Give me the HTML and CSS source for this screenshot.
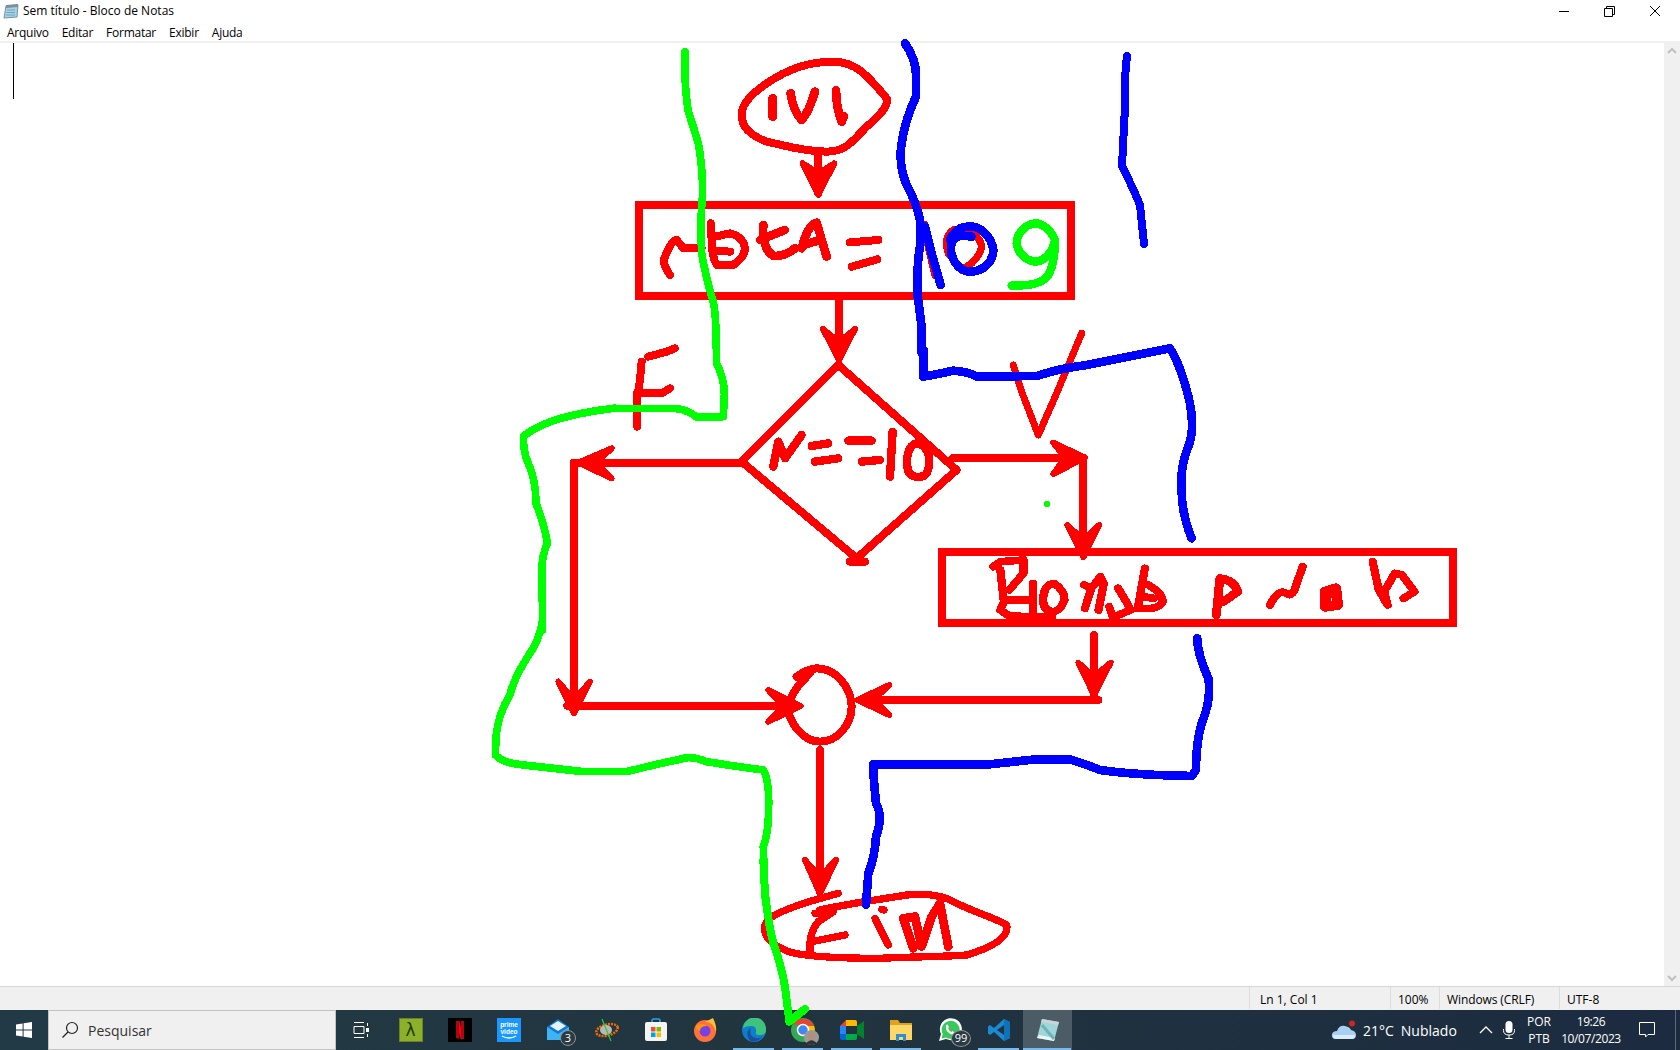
FILE: index.html
```html
<!doctype html>
<html>
<head>
<meta charset="utf-8">
<title>Sem título - Bloco de Notas</title>
<link rel="stylesheet" href="styles.css">
</head>
<body>
<div class="win">
	<div class="title_bar">
		<svg class="pad_small" viewBox="0 0 16 16"><path d="M3 3 L15 2 L14 14 L1 15Z" fill="#a9d3e3" stroke="#6d94a6"/><path d="M3 2 L15 1 L15 4 L3 5Z" fill="#7d8f99"/><path d="M4 7 H12 M3.5 9.5 H12 M3 12 H12" stroke="#6fa5bb"/></svg>
		<span class="title_text">Sem título - Bloco de Notas</span>
		<div class="win_btns">
			<svg viewBox="0 0 46 20"><path d="M19 10.5 H29" stroke="#000" fill="none"/></svg>
			<svg viewBox="0 0 46 20"><path d="M18.5 7.5 H26.5 V15.5 H18.5Z M20.5 7 V5.5 H28.5 V13.5 H27" stroke="#000" fill="none"/></svg>
			<svg viewBox="0 0 46 20"><path d="M18 5 L28 15 M28 5 L18 15" stroke="#000" fill="none"/></svg>
		</div>
	</div>
	<div class="menu_bar">
		<a>Arquivo</a><a>Editar</a><a>Formatar</a><a>Exibir</a><a>Ajuda</a>
	</div>
	<div class="editor">
		<div class="text_area"><div class="caret"></div></div>
		<div class="scroll_bar">
			<svg viewBox="0 0 16 16"><path d="M4 10 L8 6 L12 10" stroke="#c0c0c0" stroke-width="2" fill="none"/></svg>
			<svg viewBox="0 0 16 16"><path d="M4 6 L8 10 L12 6" stroke="#c0c0c0" stroke-width="2" fill="none"/></svg>
		</div>
	</div>
	<div class="status_bar">
		<div class="st st_pos">Ln 1, Col 1</div>
		<div class="st st_zoom">100%</div>
		<div class="st st_eol">Windows (CRLF)</div>
		<div class="st st_enc">UTF-8</div>
	</div>
	<div class="task_bar">
		<div class="start">
			<svg viewBox="0 0 16 16"><path d="M0 2.4 L6.6 1.4 V7.5 H0Z M7.6 1.3 L16 0 V7.5 H7.6Z M0 8.5 H6.6 V14.6 L0 13.6Z M7.6 8.5 H16 V16 L7.6 14.7Z" fill="#fff"/></svg>
		</div>
		<div class="search">
			<svg viewBox="0 0 18 18"><circle cx="11" cy="7" r="5.5" fill="none" stroke="#222" stroke-width="1.2"/><path d="M7 11 L1.5 16.5" stroke="#222" stroke-width="1.3"/></svg>
			<span>Pesquisar</span>
		</div>
		<div class="task_view">
			<svg viewBox="0 0 16 16"><path d="M1 .5 H11 M1 15.5 H11 M1 4.5 H11 V11.5 H1Z M14.5 1 V4 M14.5 12 V15" stroke="#fff" fill="none"/><rect x="13" y="6" width="3" height="4" fill="#fff"/></svg>
		</div>
		<div class="apps">
			<div class="app"><div class="lam">λ</div></div>
			<div class="app"><svg viewBox="0 0 24 24"><rect width="24" height="24" fill="#000"/><path d="M8 3 H11.5 L16 21 H12.500Z" fill="#e50914"/><path d="M8 3 H11 V21 L8 20Z M13 3 H16 V21 L13 20Z" fill="#b1060f"/></svg></div>
			<div class="app"><svg viewBox="0 0 24 24"><rect width="24" height="24" fill="#1a98ff"/><text x="12" y="9" class="prime">prime</text><text x="12" y="15.500" class="prime">video</text><path d="M5 18 Q12 22 19 18" stroke="#fff" stroke-width="1.300" fill="none"/></svg></div>
			<div class="app">
				<svg viewBox="0 0 24 24"><path d="M1 9 L12 1 L23 9 V22 H1Z" fill="#0f78d4"/><path d="M1 9 L12 16 L23 9 V22 H1Z" fill="#3fb4f2"/><path d="M4 8 L12 3 L20 8 L12 13Z" fill="#e6f3fb"/></svg>
				<div class="badge">3</div>
			</div>
			<div class="app"><svg viewBox="0 0 24 24"><ellipse cx="12" cy="12" rx="11" ry="5.500" transform="rotate(-15 12 12)" fill="none" stroke="#f26a00" stroke-width="2.500" stroke-dasharray="2 1"/><ellipse cx="11" cy="12" rx="6" ry="5" fill="#b9b9b9"/><path d="M7 1 L16 23" stroke="#2ad02a" stroke-width="1.200"/></svg></div>
			<div class="app"><svg viewBox="0 0 24 24"><path d="M8 5 V2.500 Q8 1 9.500 1 H14.500 Q16 1 16 2.500 V5" stroke="#2aa4e8" stroke-width="1.600" fill="none"/><rect x="1" y="4" width="22" height="19" rx="2" fill="#f4f4f4"/><rect x="7" y="9" width="4.500" height="4.500" fill="#f25022"/><rect x="12.500" y="9" width="4.500" height="4.500" fill="#7fba00"/><rect x="7" y="14.500" width="4.500" height="4.500" fill="#00a4ef"/><rect x="12.500" y="14.500" width="4.500" height="4.500" fill="#ffb900"/></svg></div>
			<div class="app"><svg viewBox="0 0 24 24"><circle cx="12" cy="13" r="11" fill="#ff7139"/><path d="M12 4 Q20 0 20 0 Q24 8 23 14 Q20 3 12 4Z" fill="#ffbd3a"/><circle cx="12" cy="13" r="5.500" fill="#7542e5"/><path d="M3 8 Q9 4 14 8 Q7 8 7 13 Q3 12 3 8Z" fill="#ff980e"/></svg></div>
			<div class="app"><svg viewBox="0 0 24 24"><circle cx="12" cy="12" r="12" fill="#0f7ec9"/><path d="M1 10 A11.500 11.500 0 0 1 24 12 Q24 17 18 17 Q13 17 14 14 Q15 8 9 8 Q4 8 1 10Z" fill="#3fc27e"/><path d="M8 23 Q2 14 9 10 Q6 18 14 20 Q18 21 21 18 Q16 25 8 23Z" fill="#1b4f9e"/></svg></div>
			<div class="app">
				<svg viewBox="0 0 24 24"><circle cx="12" cy="12" r="12" fill="#34a853"/><path d="M2 6 A12 12 0 0 1 23 8 H12Z" fill="#ea4335"/><path d="M12 8 H23 A12 12 0 0 1 14 24Z" fill="#fbbc05"/><circle cx="12" cy="12" r="5.500" fill="#4285f4" stroke="#fff" stroke-width="1.500"/></svg>
				<svg class="avatar" viewBox="0 0 14 14"><circle cx="7" cy="7" r="7" fill="#9a9a9a"/><circle cx="7" cy="5.500" r="3.200" fill="#b98d74"/><path d="M1.500 13 Q7 6 12.500 13 L7 14Z" fill="#333"/></svg>
			</div>
			<div class="app"><svg viewBox="0 0 24 24"><path d="M0 8 L6 2 H6 V8Z" fill="#ea4335"/><path d="M6 2 H15 Q17 2 17 4 V8 H6Z" fill="#ffba00"/><path d="M0 8 H6 V16 H0Z" fill="#2684fc"/><path d="M0 16 H6 V22 H2 Q0 22 0 20Z" fill="#0066da"/><path d="M6 16 H17 V20 Q17 22 15 22 H6Z" fill="#00ac47"/><path d="M17 8 L24 3 V21 L17 16Z" fill="#00832d"/><rect x="6" y="8" width="11" height="8" fill="#22333f"/></svg></div>
			<div class="app"><svg viewBox="0 0 24 24"><path d="M1 2 H9 L11 5 H23 V22 H1Z" fill="#e0a11c"/><rect x="1" y="7" width="22" height="15" fill="#ffd766"/><path d="M7 23 V16 H17 V23 H14 V19 H10 V23Z" fill="#2a8fd8"/></svg></div>
			<div class="app">
				<svg viewBox="0 0 24 24"><path d="M1 23 L3 16 A11 11 0 1 1 8 21Z" fill="#fff"/><path d="M3.500 20.500 L4.700 16 A9 9 0 1 1 8 19.500Z" fill="#3cc75c"/><path d="M8 7 Q7 12 11 15 Q15 18 17 15 L14.500 13 L13.500 14 Q11 13 10 10 L11 9 L9.500 6.500Z" fill="#fff"/></svg>
				<div class="badge wide">99</div>
			</div>
			<div class="app"><svg viewBox="0 0 24 24"><path d="M17 1 L23 4 V20 L17 23 L7 14 L3 17 L1 15.500 V8.500 L3 7 L7 10Z" fill="#1a8ad4"/><path d="M17 1 L23 4 V20 L17 23Z" fill="#0f72b8"/><path d="M17 7 L10 12 L17 17Z" fill="#22333f"/></svg></div>
			<div class="app active"><svg viewBox="0 0 24 24"><path d="M6 1 L23 4 L18 23 L1 20Z" fill="#9fd6d8"/><path d="M6 1 L23 4 L22 7 L5 4Z" fill="#c9d3d8"/><path d="M1 20 L18 23 L19 20 L3 17Z" fill="#eaf6f6"/><path d="M6 7 L18 21" stroke="#6bb4bc" stroke-width="3"/></svg></div>
		</div>
		<div class="tray">
			<div class="weather">
				<svg viewBox="0 0 26 20"><path d="M5 19 Q0 19 1 14 Q2 11 6 11 Q8 5 14 6 Q19 7 20 10 Q25 11 25 15 Q25 19 21 19Z" fill="#a9d0f0"/><path d="M2 15 H24 Q24 19 21 19 H5 Q2 19 2 15Z" fill="#d9ecfa"/><circle cx="21" cy="3.500" r="3" fill="#c9281e"/></svg>
				<span class="temp">21°C</span><span>Nublado</span>
			</div>
			<svg class="chev" viewBox="0 0 14 8"><path d="M1 7 L7 1 L13 7" stroke="#fff" stroke-width="1.300" fill="none"/></svg>
			<svg class="mic" viewBox="0 0 12 18"><rect x="2.500" y="0" width="7" height="12" rx="3.500" fill="#fff"/><path d="M.5 8 V9.500 Q.5 14 6 14 Q11.500 14 11.500 9.500 V8 M6 14 V17 M2.500 17.500 H9.500" stroke="#fff" fill="none"/></svg>
			<div class="lang"><div>POR</div><div>PTB</div></div>
			<div class="clock"><div>19:26</div><div>10/07/2023</div></div>
			<svg class="notif" viewBox="0 0 16 16"><path d="M.5 .5 H15.500 V12.500 H9 L6.500 15 V12.500 H.5Z" stroke="#fff" fill="none"/></svg>
			<div class="show_desk"></div>
		</div>
	</div>
</div>

<svg class="ink" viewBox="0 0 1680 1050" shape-rendering="crispEdges">
	<g class="red" stroke-width="8">
		<rect x="639" y="205" width="432" height="91"/>
		<rect x="942" y="552" width="511" height="71"/>
		<path d="M839 300 V350"/>
		<path class="head" stroke-width="6" d="M823 329 L839 360 L855 329 L839 342Z"/>
	</g>
	<g class="red" transform="translate(620 40) scale(.3333)" stroke-width="24">
		<path d="M365 225 C365 180 420 145 440 130 C500 90 560 65 640 65 C710 65 745 110 800 175 C810 195 770 235 740 260 C700 300 680 335 620 335 C550 335 490 315 440 305 C400 290 365 265 365 225Z"/>
		<path stroke-width="26" d="M458 175 V230 M512 160 Q520 215 545 240 Q565 220 585 155 M648 150 Q650 210 665 245 L672 228"/>
		<path d="M595 350 V460"/>
		<path class="head" stroke-width="18" d="M548 370 L595 465 L643 370 L595 400Z"/>
		<path stroke-width="24" d="M150 705 Q125 670 135 650 Q155 600 170 600 L190 625 L245 625"/>
		<path stroke-width="24" d="M272 550 L275 600 Q275 650 290 675 L340 675 Q375 650 375 625 Q370 590 330 580 L285 590 M290 632 L330 635"/>
		<path stroke-width="26" d="M430 555 Q425 625 460 648 Q495 650 525 625 M420 600 L495 570"/>
		<path stroke-width="26" d="M545 625 Q565 550 590 548 Q605 600 620 650 M550 615 L600 600"/>
		<path stroke-width="24" d="M690 607 L775 600 M695 680 L772 658"/>
		<path stroke-width="22" d="M915 555 L925 620 L945 705"/>
		<path stroke-width="22" d="M1000 570 Q970 590 985 640 L1025 690 L1055 670 Q1085 640 1085 615 Q1075 585 1045 575"/>
	</g>
	<g class="red" transform="translate(720 350) scale(.3333)" stroke-width="24">
		<path d="M355 45 L65 335 L410 625 L710 360Z"/>
		<path d="M390 635 H435"/>
		<path stroke-width="25" d="M160 350 L175 275 L195 325 L245 255 M275 288 L325 280 M285 335 L355 325 M385 272 L455 272 M425 335 L480 330 M518 245 L510 380 M590 280 C565 285 555 325 565 365 C575 385 610 385 620 370 C635 340 630 285 590 280Z"/>
		<path d="M700 323 H1090 V610"/>
		<path class="head" stroke-width="18" d="M1000 278 L1095 323 L1000 372 L1035 323Z"/>
		<path class="head" stroke-width="18" d="M1042 525 L1090 622 L1138 525 L1090 570Z"/>
		<path stroke-width="21" d="M880 45 L905 125 L955 255 L1010 130 L1085 -50"/>
	</g>
	<g class="red" transform="translate(480 330) scale(.3333)" stroke-width="24">
		<path d="M485 95 L480 150 L470 210 L472 290 M505 80 L560 65 L585 55 M470 190 L545 190 L570 175"/>
		<path d="M790 398 H282 V900"/>
		<path class="head" stroke-width="18" d="M395 355 L295 398 L395 445 L350 398Z"/>
	</g>
	<g class="red" transform="translate(480 620) scale(.3333)" stroke-width="24">
		<path d="M282 0 V270 M262 257 H950"/>
		<path class="head" stroke-width="18" d="M235 185 L282 280 L330 185 L282 240Z"/>
		<path class="head" stroke-width="18" d="M865 210 L962 258 L865 305 L910 258Z"/>
		<path d="M950 170 C985 145 1010 140 1040 150 C1080 165 1115 210 1115 260 C1115 310 1075 365 1020 365 C980 365 945 330 930 290 M930 240 C945 205 965 185 990 160"/>
		<path d="M1020 390 V810"/>
		<path class="head" stroke-width="18" d="M975 720 L1020 822 L1068 720 L1020 770Z"/>
	</g>
	<g class="red" transform="translate(840 620) scale(.3333)" stroke-width="24">
		<path d="M762 45 V240 M775 240 H60"/>
		<path class="head" stroke-width="18" d="M715 128 L762 225 L812 128 L762 170Z"/>
		<path class="head" stroke-width="18" d="M148 195 L52 240 L148 285 L100 240Z"/>
	</g>
	<g class="red" transform="translate(920 530) scale(.357 .3333)" stroke-width="23">
		<path d="M205 110 L225 95 L290 90 L290 130 L250 180 M225 120 L235 215 L225 240 L250 258 L370 262 M245 210 L310 210 M316 160 V255"/>
		<path d="M345 210 Q345 165 375 160 Q405 180 405 210 Q395 240 375 245 Q345 245 345 210Z"/>
		<path d="M460 165 L480 175 L462 235 M480 175 L505 140 L515 160 L500 240 M555 175 L575 210 L590 240 L540 262 L530 230 M630 115 L610 235 M640 165 Q680 190 680 215 Q670 240 615 235 M625 200 L655 205"/>
		<path stroke-width="25" d="M830 255 L840 145 Q880 150 890 185 L850 215"/>
		<path d="M980 225 Q1005 175 1025 190 Q1045 205 1055 160 L1072 110"/>
		<path stroke-width="30" d="M1135 230 L1135 185 L1165 175 L1170 225Z"/>
		<path d="M1268 95 L1285 180 L1310 225 L1300 185 L1330 130 L1350 135 L1385 185 L1355 205"/>
	</g>
	<g class="red" transform="translate(740 860) scale(.3333)" stroke-width="22">
		<path d="M295 100 C220 120 100 155 80 185 C60 220 90 250 130 268 C170 290 300 295 420 295 C520 290 620 290 680 285 C730 270 810 240 800 195 C780 180 700 155 650 130 C610 105 550 100 500 105 C440 115 330 130 240 150"/>
		<path d="M225 160 L280 155 L235 185 Q205 220 210 280 M215 245 L315 225"/>
		<path d="M405 175 L445 255 M425 148 L432 150"/>
		<path stroke-width="26" d="M490 175 L520 265 M490 175 L525 170 L545 260 L575 170 L600 130 L625 260"/>
	</g>

	<g class="green" transform="translate(620 40) scale(.3333)" stroke-width="23">
		<path d="M195 35 L195 110 Q198 170 205 215 Q222 265 235 310 Q248 380 248 460 Q240 540 245 640 Q255 700 275 770 Q288 800 288 900"/>
		<path stroke-width="25" d="M1305 600 C1290 565 1265 550 1245 550 C1210 555 1190 585 1190 610 C1195 645 1225 665 1250 665 C1280 660 1300 630 1305 600 C1305 640 1300 680 1285 705 C1265 735 1220 737 1175 737"/>
	</g>
	<g class="green" transform="translate(480 330) scale(.3333)" stroke-width="23">
		<path d="M708 0 L710 100 Q735 150 733 200 L730 260 L650 262 Q625 240 590 236 L400 235 Q320 245 270 258 Q190 275 130 318 Q130 370 145 400 Q168 450 168 520 Q195 590 202 640 Q185 680 186 720 L188 900"/>
	</g>
	<g class="green" transform="translate(480 620) scale(.3333)" stroke-width="23">
		<path d="M188 0 Q180 60 140 115 Q100 180 90 225 Q55 280 48 350 L46 405 Q70 430 130 435 Q250 448 310 455 L440 455 Q540 430 600 418 Q630 405 680 425 Q770 440 850 450 Q868 480 866 560 Q866 640 850 680 L855 830"/>
	</g>
	<g class="green" transform="translate(740 860) scale(.3333)" stroke-width="24">
		<path d="M70 0 L75 100 Q85 190 100 250 Q125 320 135 380 L148 485 L195 447"/>
	</g>
	<circle cx="1047" cy="504" r="3" class="dot"/>

	<g class="blue" transform="translate(620 40) scale(.3333)" stroke-width="26">
		<path d="M855 10 Q890 60 888 110 L888 170 Q855 240 845 310 Q835 370 858 430 Q890 490 900 540 L900 620 Q890 680 892 760 L905 860 L905 940"/>
		<path d="M915 560 L935 640 L962 735"/>
		<path d="M1055 590 C1030 585 1000 585 995 610 C985 650 1015 695 1050 695 C1090 695 1120 665 1120 630 C1115 590 1080 555 1045 560 C1020 560 1000 575 990 600"/>
	</g>
	<g class="blue" transform="translate(720 350) scale(.3333)" stroke-width="26">
		<path d="M612 0 L610 80 Q640 75 700 62 Q745 65 770 80 L950 78 Q1020 55 1100 45 L1350 -5 Q1385 50 1410 160 Q1425 240 1405 290 Q1380 350 1385 420 Q1385 490 1415 565"/>
	</g>
	<g class="blue" stroke-width="8"><path d="M1127 56 Q1124 80 1125 107 L1122 166 Q1134 190 1140 205 L1144 244"/></g>
	<g class="blue" transform="translate(840 620) scale(.3333)" stroke-width="26">
		<path d="M1072 55 Q1072 100 1105 175 Q1115 240 1085 310 Q1068 370 1068 450 L1055 468 L950 465 Q850 460 780 450 Q730 430 690 418 L590 418 Q520 425 450 433 L100 433 L100 460 L108 550 Q130 590 108 650 Q105 710 85 760 L78 855"/>
	</g>
</svg>
</body>
</html>
```

FILE: styles.css
```css
*{margin:0; padding:0; box-sizing:border-box;}
html,body{height:100%; overflow:hidden;}
body{background:#fff; font-family:"Open Sans","Noto Sans",sans-serif; font-size:12px; color:#000;}
.win{height:1050px; display:flex; flex-direction:column;}

.title_bar{height:21px; display:flex; align-items:center; padding-left:3px;}
.pad_small{width:16px; height:16px; flex:none;}
.title_text{margin-left:4px; font-size:12px; line-height:23px;}
.win_btns{margin-left:auto; margin-right:2px; display:flex;}
.win_btns svg{width:46px; height:20px; display:block;}

.menu_bar{height:20px; display:flex; padding-left:7px; gap:13px; line-height:23px; letter-spacing:-.25px;}

.editor{flex:1; display:flex; border-top:2px solid #f0f0f0; min-height:0;}
.text_area{flex:1; padding-left:13px;}
.caret{width:1px; height:56px; background:#000;}
.scroll_bar{width:16px; background:#f0f0f0; display:flex; flex-direction:column; justify-content:space-between;}
.scroll_bar svg{width:16px; height:16px; display:block;}

.status_bar{height:24px; background:#f0f0f0; border-top:1px solid #d7d7d7; display:flex; padding-left:1249px; line-height:25px;}
.st{border-left:1px solid #dcdcdc; padding-left:10px; height:22px;}
.st_pos{width:141px;}
.st_zoom{width:49px; padding-left:7px;}
.st_eol{width:120px; padding-left:7px; letter-spacing:-.1px;}
.st_enc{padding-left:7px;}

.task_bar{height:40px; flex:none; display:flex; align-items:stretch; color:#fff; background:linear-gradient(90deg,#223a45,#21353f 45%,#1c2b40);}
.start{width:48px; display:flex; align-items:center; justify-content:center;}
.start svg{width:16px; height:16px;}
.search{width:288px; background:#f0f0f0; border:1px solid #c2c2c2; color:#333; display:flex; align-items:center; padding-left:12px; font-size:14px;}
.search svg{width:18px; height:18px;}
.search span{margin-left:9px;}
.task_view{width:49px; display:flex; align-items:center; justify-content:center;}
.task_view svg{width:16px; height:16px;}
.apps{display:flex; margin-left:1px;}
.app{width:49px; position:relative; display:flex; align-items:center; justify-content:center;}
.app>svg:first-child{width:24px; height:24px;}
.app.active{background:#4c5c67;}
.lam{width:24px; height:24px; background:#8cb027; color:#1d3a10; border:1px solid #6f7f2a; text-align:center; line-height:22px; font-size:17px; font-family:"DejaVu Sans",sans-serif;}
.prime{font:700 6.5px "Liberation Sans",sans-serif; fill:#fff; text-anchor:middle;}
.badge{position:absolute; left:27px; top:20px; width:16px; height:16px; border-radius:50%; background:#2c3a42; border:1px solid #8a949a; font-size:11px; line-height:14px; text-align:center;}
.badge.wide{width:20px; height:17px; left:26px; top:20px;}
.avatar{position:absolute; left:26px; top:20px; width:15px; height:15px;}

.apps .app:nth-child(8)::after,.apps .app:nth-child(9)::after,.apps .app:nth-child(10)::after,.apps .app:nth-child(11)::after,.apps .app:nth-child(13)::after,.apps .app:nth-child(14)::after{content:""; position:absolute; left:4px; right:4px; bottom:0; height:2px; background:#76b9ed;}
.apps .app:nth-child(14)::after{left:0; right:1px;}

.tray{margin-left:auto; display:flex; align-items:center;}
.weather{display:flex; align-items:center; font-size:14px; width:147px;}
.weather svg{width:26px; height:20px; margin-right:6px;}
.temp{margin-right:7px;}
.chev{width:14px; height:8px; margin-left:1px;}
.mic{width:12px; height:18px; margin-left:10px;}
.lang{width:42px; margin-left:3px; text-align:center; line-height:17px; margin-top:-1px;}
.clock{width:60px; text-align:center; line-height:17px; margin-left:1px; margin-top:-1px; letter-spacing:-.4px;}
.notif{width:16px; height:16px; margin-left:18px;}
.show_desk{width:5px; height:100%; border-left:1px solid #5c6a78; margin-left:20px;}

.ink{position:absolute; left:0; top:0; width:1680px; height:1050px; pointer-events:none;}
.ink path,.ink rect{fill:none; stroke-linecap:round; stroke-linejoin:round;}
.ink rect{stroke-linejoin:miter;}
.red{stroke:#f00;}
.green{stroke:#0f0;}
.blue{stroke:#00f;}
.ink path.head{fill:#f00;}
.dot{fill:#0f0; stroke:none;}
```
